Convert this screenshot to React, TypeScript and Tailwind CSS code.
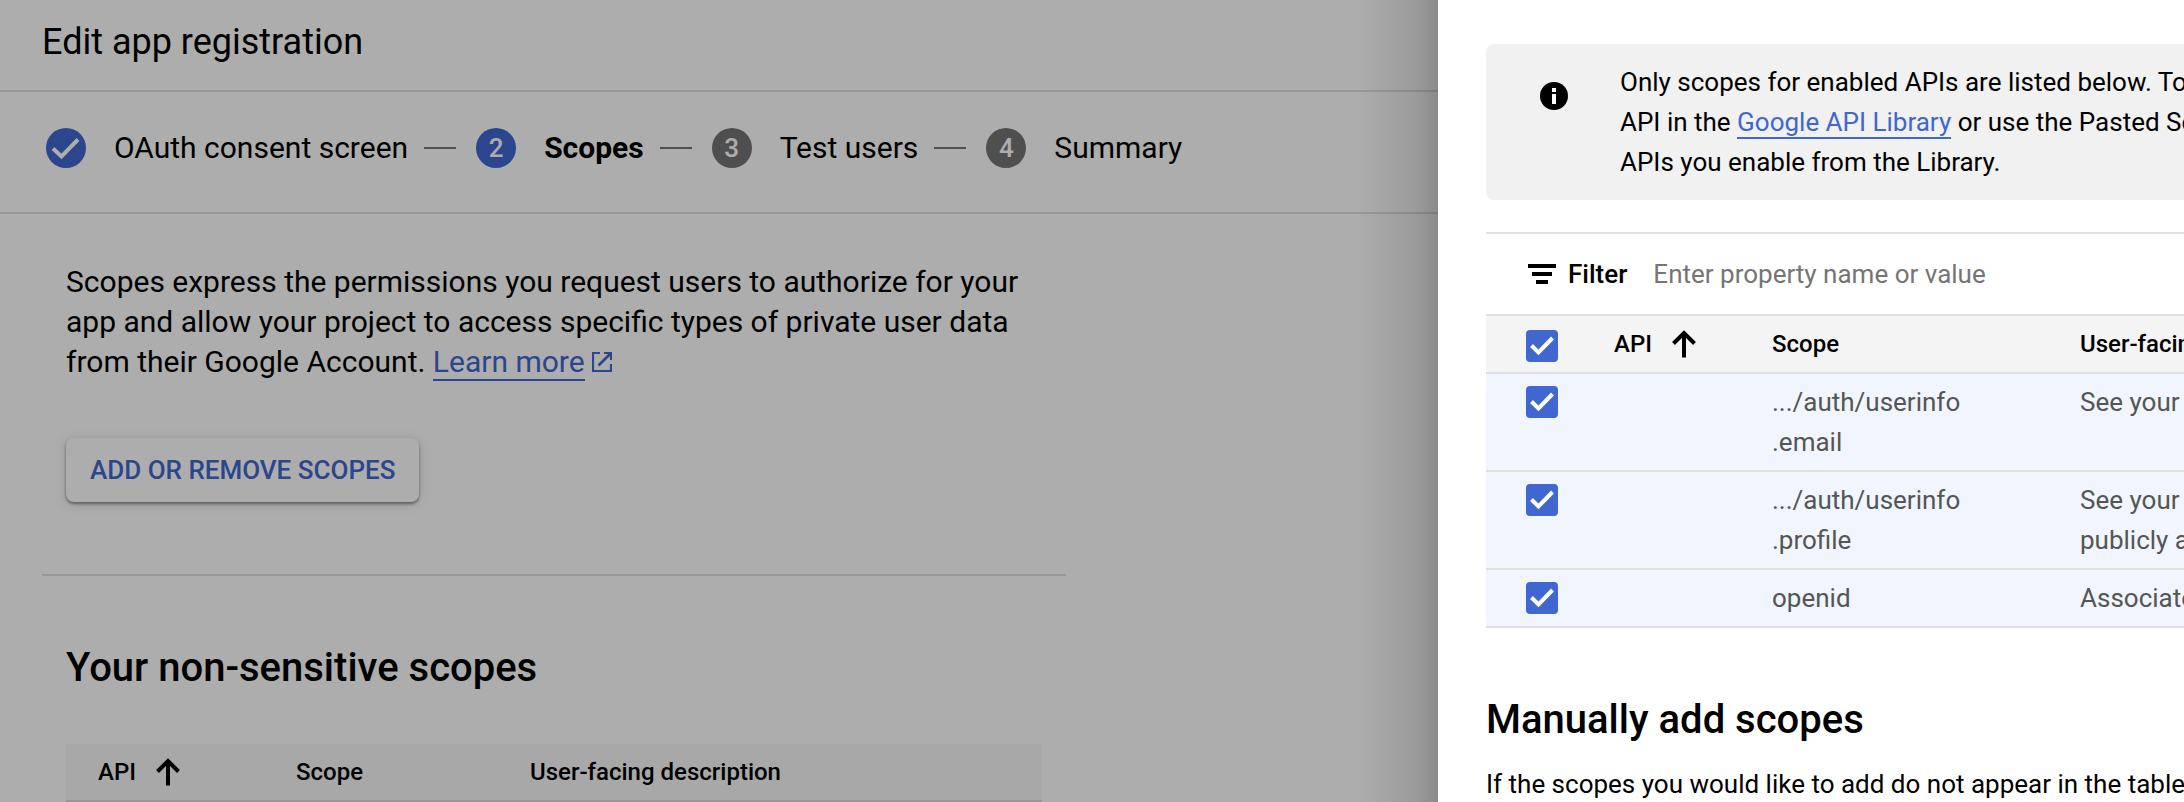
import { useState, type ReactNode } from "react";

const STEPS = ["OAuth consent screen", "Scopes", "Test users", "Summary"];

const SCOPES = [
  { id: "email", scope: [".../auth/userinfo", ".email"], description: ["See your"] },
  { id: "profile", scope: [".../auth/userinfo", ".profile"], description: ["See your", "publicly available"] },
  { id: "openid", scope: ["openid"], description: ["Associate"] },
];

function StepCheck() {
  return (
    <svg viewBox="0 0 40 40" className="h-10 w-10" aria-hidden="true">
      <path d="M7 20.500 15.500 28.500 32 11.500" fill="none" stroke="currentColor" strokeWidth="4" />
    </svg>
  );
}

function SortArrow() {
  return (
    <svg viewBox="0 0 24 28" className="h-7 w-6" aria-hidden="true">
      <path d="M12 27.500V3M1.500 13.500 12 3l10.500 10.500" fill="none" stroke="currentColor" strokeWidth="4" />
    </svg>
  );
}

function ExternalIcon() {
  return (
    <svg viewBox="0 0 20 20" className="ml-[7px] inline-block h-5 w-5 align-baseline" aria-hidden="true">
      <path d="M8 1H1v18h18v-7M12 1h7v7" fill="none" stroke="currentColor" strokeWidth="2.2" />
      <path d="M18.500 1.500 6.500 13.500" fill="none" stroke="currentColor" strokeWidth="2.600" />
    </svg>
  );
}

function Lines({ items }: { items: string[] }) {
  return (
    <>
      {items.map((line) => (
        <span key={line} className="block">
          {line}
        </span>
      ))}
    </>
  );
}

function Checkbox({ label, checked, onChange }: { label: string; checked: boolean; onChange: () => void }) {
  return (
    <label className="relative block h-8 w-8">
      <input
        type="checkbox"
        aria-label={label}
        checked={checked}
        onChange={onChange}
        className="peer block h-8 w-8 appearance-none rounded border-2 border-[#757575] bg-white checked:border-[#4067d0] checked:bg-[#4067d0]"
      />
      <span className="pointer-events-none absolute inset-0 hidden items-center justify-center text-white peer-checked:flex">
        <svg viewBox="0 0 32 32" className="h-8 w-8" aria-hidden="true">
          <path d="M5.500 15.500 12.500 22.500 26.500 8" fill="none" stroke="currentColor" strokeWidth="4" />
        </svg>
      </span>
    </label>
  );
}

function StepBadge({ index }: { index: number }) {
  const base = "flex h-10 w-10 shrink-0 items-center justify-center rounded-full text-[26px] font-medium text-white";
  return (
    <span className={index < 2 ? `${base} bg-[#4067d0]` : `${base} bg-[#757575]`}>
      {index === 0 ? <StepCheck /> : index + 1}
    </span>
  );
}

function Th({ className, children }: { className: string; children?: ReactNode }) {
  return <th className={`p-0 text-left font-medium whitespace-nowrap ${className}`}>{children}</th>;
}

function RegistrationPage() {
  return (
    <main>
      <header className="border-b-2 border-[#e0e0e0] px-[42px] pt-[18px] pb-6">
        <h1 className="text-[36px] leading-[48px]">Edit app registration</h1>
      </header>
      <ol className="flex h-[122px] items-center border-b-2 border-[#e0e0e0] px-[46px] pb-2 text-[30px] leading-10">
        {STEPS.map((step, i) => (
          <li key={step} className="flex items-center" aria-current={i === 1 ? "step" : undefined}>
            {i > 0 && <span className="mr-5 ml-4 h-0.5 w-8 bg-[#757575]" />}
            <StepBadge index={i} />
            <span className={i === 1 ? "ml-7 font-bold" : "ml-7"}>{step}</span>
          </li>
        ))}
      </ol>
      <section className="ml-[42px] w-[1024px] border-b-2 border-[#e0e0e0] px-6 pt-12 pb-[72px]">
        <p className="text-[30px] leading-10">
          Scopes express the permissions you request users to authorize for your
          app and allow your project to access specific types of private user data
          from their Google Account.{" "}
          <a href="#learn-more" className="text-[#4067d0]">
            <span className="border-b-2">Learn more</span>
            <ExternalIcon />
          </a>
        </p>
        <button
          type="button"
          className="mt-14 h-16 rounded-lg bg-white px-6 text-[26px] font-medium text-[#4067d0] shadow-[0_2px_3px_rgba(0,0,0,0.4),0_2px_12px_rgba(0,0,0,0.15)]"
        >
          ADD OR REMOVE SCOPES
        </button>
      </section>
      <section className="ml-[66px] w-[976px] pt-16">
        <h2 className="text-[40px] leading-[56px] font-medium">Your non-sensitive scopes</h2>
        <table className="mt-12 w-full table-fixed border-collapse text-[24px]">
          <thead>
            <tr className="h-[57px] border-b-2 border-[#e0e0e0] bg-[#f8f8f8]">
              <Th className="w-[230px] pl-8">
                <span className="flex items-center gap-5">
                  API <SortArrow />
                </span>
              </Th>
              <Th className="w-[234px]">Scope</Th>
              <Th className="w-auto">User-facing description</Th>
            </tr>
          </thead>
        </table>
      </section>
    </main>
  );
}

function ScopeDrawer() {
  const [selected, setSelected] = useState<string[]>(SCOPES.map((s) => s.id));
  const toggle = (id: string) =>
    setSelected((now) => (now.includes(id) ? now.filter((x) => x !== id) : [...now, id]));
  const all = selected.length === SCOPES.length;

  return (
    <aside className="absolute inset-y-0 right-0 w-[746px] bg-white">
      <div className="absolute inset-y-0 right-full w-20 bg-linear-to-l from-black/20 via-black/10 via-30% to-transparent" />
      <div className="h-full overflow-hidden pt-11 pl-12">
        <div className="flex rounded-l-lg bg-[#f1f1f1] py-[18px] pl-[54px] text-[26px] leading-10 whitespace-nowrap">
          <svg viewBox="0 0 28 28" className="mt-5 mr-[52px] h-7 w-7 shrink-0" aria-hidden="true">
            <circle cx="14" cy="14" r="14" />
            <path fill="#fff" d="M12 6h4v4h-4zM12 12h4v10h-4z" />
          </svg>
          <p>
            Only scopes for enabled APIs are listed below. To
            <br />
            API in the{" "}
            <a href="#api-library" className="border-b-2 text-[#4067d0]">
              Google API Library
            </a>{" "}
            or use the Pasted Scopes
            <br />
            APIs you enable from the Library.
          </p>
        </div>

        <div className="mt-8 flex h-[84px] items-center border-y-2 border-[#e0e0e0] pl-[42px] text-[26px]">
          <svg viewBox="0 0 28 20" className="mr-3 h-5 w-7" aria-hidden="true">
            <path d="M0 0h28v4H0zM4 8h20v4H4zM8 16h12v4H8z" />
          </svg>
          <label htmlFor="scope-filter" className="font-medium">
            Filter
          </label>
          <input
            id="scope-filter"
            type="text"
            placeholder="Enter property name or value"
            className="ml-[26px] min-w-0 flex-1 outline-none placeholder:text-[#757575]"
          />
        </div>

        <table className="w-full table-fixed border-collapse text-[26px] leading-10">
          <thead>
            <tr className="h-[57px] border-b-2 border-[#e0e0e0] bg-[#f4f4f4] text-[24px]">
              <Th className="w-[128px] pt-[3px] pl-10">
                <Checkbox
                  label="Select all scopes"
                  checked={all}
                  onChange={() => setSelected(all ? [] : SCOPES.map((s) => s.id))}
                />
              </Th>
              <Th className="w-[158px]">
                <span className="flex items-center gap-5">
                  API <SortArrow />
                </span>
              </Th>
              <Th className="w-[308px]">Scope</Th>
              <Th className="w-auto">User-facing</Th>
            </tr>
          </thead>
          <tbody className="text-[#555555]">
            {SCOPES.map((row) => (
              <tr key={row.id} className="border-b-2 border-[#e0e0e0] bg-[#f0f5fe] align-top whitespace-nowrap">
                <td className="pt-3 pl-10">
                  <Checkbox
                    label={`Select ${row.scope.join("")}`}
                    checked={selected.includes(row.id)}
                    onChange={() => toggle(row.id)}
                  />
                </td>
                <td />
                <td className="py-2">
                  <Lines items={row.scope} />
                </td>
                <td className="py-2">
                  <Lines items={row.description} />
                </td>
              </tr>
            ))}
          </tbody>
        </table>

        <h2 className="mt-16 text-[40px] leading-[56px] font-medium">Manually add scopes</h2>
        <p className="mt-4 text-[26px] leading-10 whitespace-nowrap">
          If the scopes you would like to add do not appear in the table
        </p>
      </div>
    </aside>
  );
}

export default function App() {
  return (
    <div className="relative h-screen overflow-hidden bg-white font-[Roboto,sans-serif] text-black">
      <RegistrationPage />
      <div className="absolute inset-0 bg-black/32" />
      <ScopeDrawer />
    </div>
  );
}
